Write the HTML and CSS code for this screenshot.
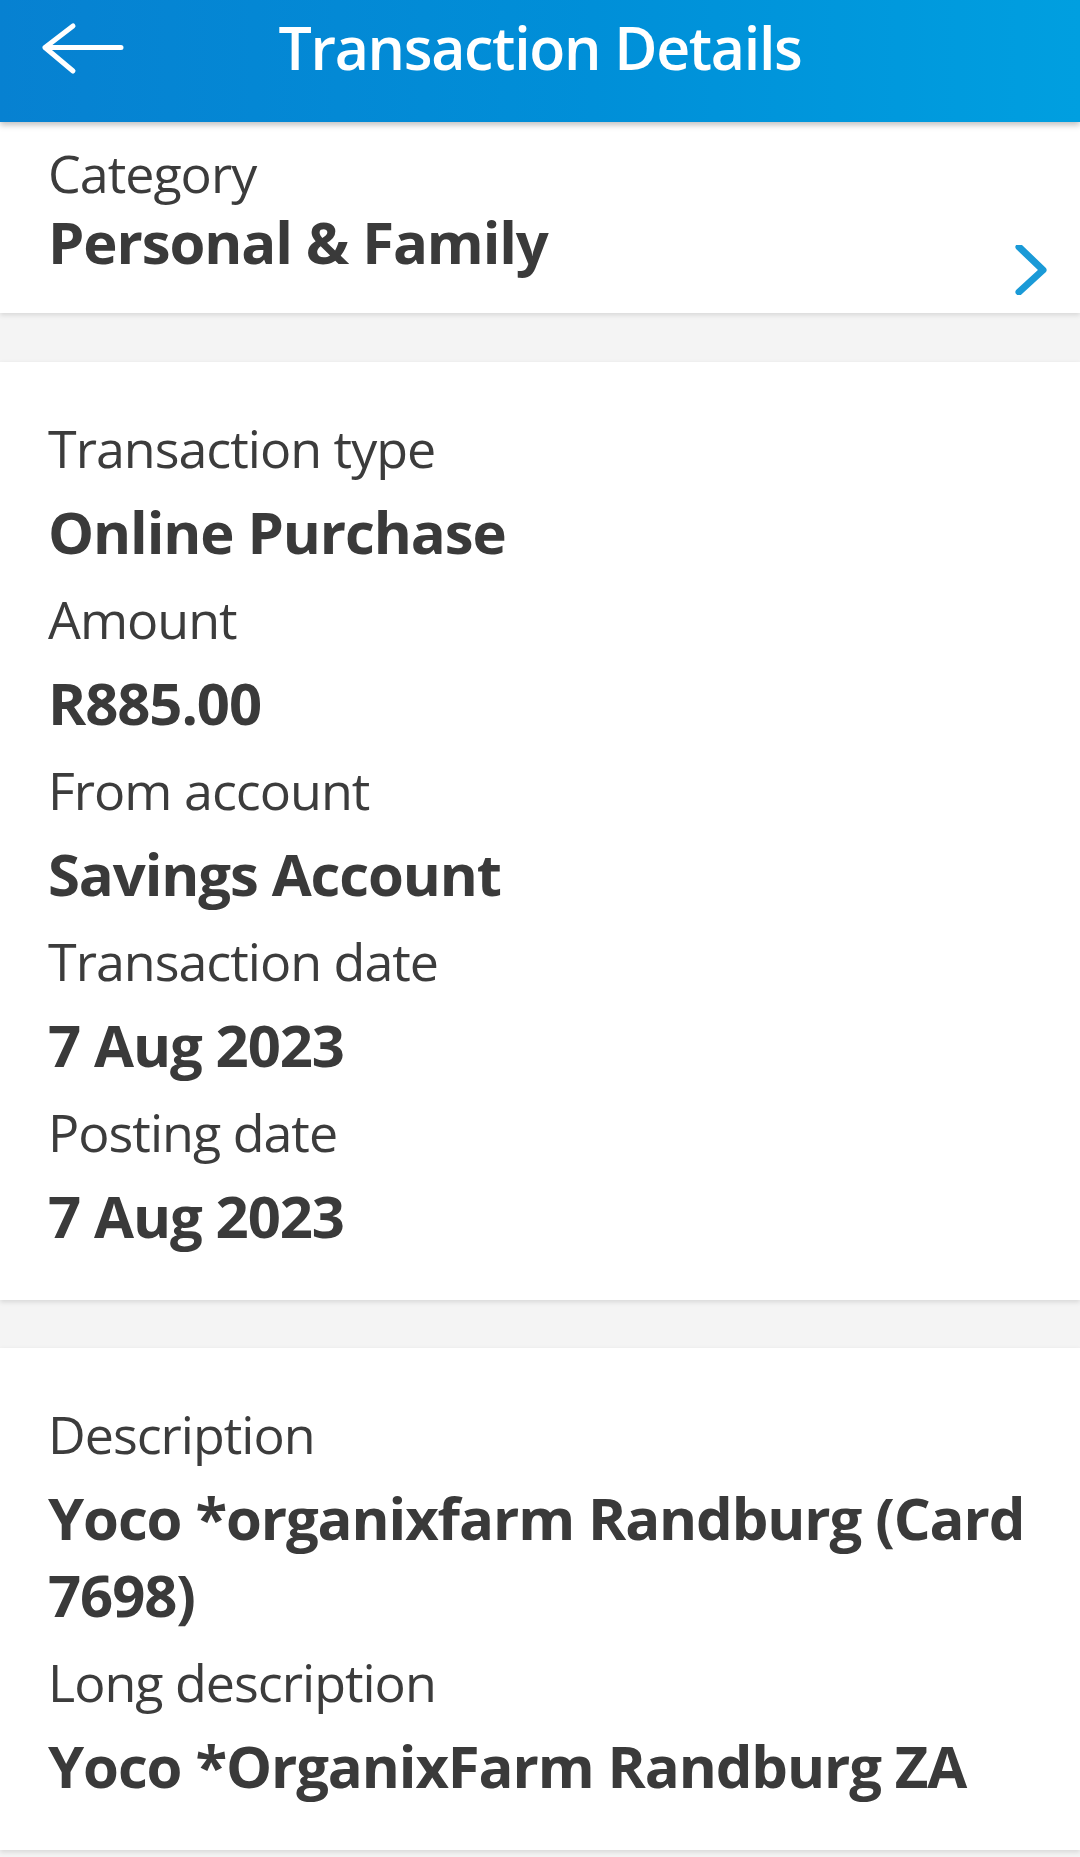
FILE: index.html
```html
<!DOCTYPE html>
<html lang="en">
<head>
<meta charset="utf-8">
<title>Transaction Details</title>
<link rel="stylesheet" href="styles.css">
</head>
<body>
<header class="topbar">
  <div class="topbar-left">
    <svg class="back-icon" viewBox="0 0 90 60" aria-hidden="true">
      <path d="M35 8 L7 29.5 L35 53 M7 29.5 L83 29.5" fill="none" stroke="#ffffff" stroke-width="5" stroke-linecap="round" stroke-linejoin="round"/>
    </svg>
  </div>
  <h1 class="title">Transaction Details</h1>
  <div class="topbar-right"></div>
</header>
<main class="content">
  <section class="card card-category">
    <div class="category-text">
      <div class="label label-tight">Category</div>
      <div class="value value-tight">Personal &amp; Family</div>
    </div>
    <svg class="chevron" viewBox="0 0 36 50" aria-hidden="true">
      <path d="M6 2 L30 25 L6 47" fill="none" stroke="#1a9ad7" stroke-width="7" stroke-linecap="round" stroke-linejoin="round"/>
    </svg>
  </section>

  <section class="card card-details">
    <div class="field">
      <div class="label">Transaction type</div>
      <div class="value">Online Purchase</div>
    </div>
    <div class="field">
      <div class="label">Amount</div>
      <div class="value">R885.00</div>
    </div>
    <div class="field">
      <div class="label">From account</div>
      <div class="value">Savings Account</div>
    </div>
    <div class="field">
      <div class="label">Transaction date</div>
      <div class="value">7 Aug 2023</div>
    </div>
    <div class="field">
      <div class="label">Posting date</div>
      <div class="value">7 Aug 2023</div>
    </div>
  </section>

  <section class="card card-description">
    <div class="field">
      <div class="label">Description</div>
      <div class="value">Yoco *organixfarm Randburg (Card 7698)</div>
    </div>
    <div class="field">
      <div class="label">Long description</div>
      <div class="value">Yoco *OrganixFarm Randburg ZA</div>
    </div>
  </section>
</main>
</body>
</html>
```

FILE: styles.css
```css
html, body {
  margin: 0;
  padding: 0;
}

body {
  background: #f4f4f4;
  min-height: 1857px;
  font-family: "Open Sans", "Noto Sans", sans-serif;
  color: #3c3c3c;
}

.topbar {
  position: relative;
  z-index: 2;
  display: grid;
  grid-template-columns: 1fr auto 1fr;
  align-items: start;
  height: 122px;
  box-sizing: border-box;
  padding-top: 18px;
  background: linear-gradient(90deg, #0781d1 0%, #008fd8 55%, #009fe0 100%);
  box-shadow: 0 3px 6px rgba(0, 0, 0, 0.25);
}

.back-icon {
  display: block;
  width: 90px;
  height: 60px;
  margin: 0 0 0 38px;
}

.title {
  margin: 0;
  font-family: "Open Sans", "Noto Sans", sans-serif;
  font-weight: 600;
  font-size: 59px;
  line-height: 59px;
  letter-spacing: -1.3px;
  color: #ffffff;
  white-space: nowrap;
}

.content {
  display: flex;
  flex-direction: column;
}

.card {
  background: #ffffff;
  box-shadow: 0 2px 5px rgba(0, 0, 0, 0.12);
}

.card-category {
  display: flex;
  height: 191px;
  box-sizing: border-box;
  padding: 15px 31px 0 48px;
  margin-bottom: 49px;
}

.category-text {
  flex: 1;
  padding-bottom: 38px;
}

.chevron {
  align-self: flex-end;
  width: 36px;
  height: 50px;
  margin-bottom: 18px;
  flex-shrink: 0;
}

.card-details {
  padding: 43px 40px 40px 48px;
  margin-bottom: 48px;
}

.card-description {
  padding: 43px 40px 40px 48px;
}

.label {
  font-weight: 400;
  font-size: 52px;
  line-height: 85px;
  letter-spacing: -1px;
  color: #3c3c3c;
  white-space: nowrap;
}

.value {
  font-weight: 700;
  font-size: 58px;
  line-height: 77px;
  letter-spacing: -1.1px;
  padding: 3px 0 6px;
  color: #3a3a3a;
}

.label-tight {
  line-height: 71px;
}

.value-tight {
  line-height: 67px;
  padding: 0;
}
```
